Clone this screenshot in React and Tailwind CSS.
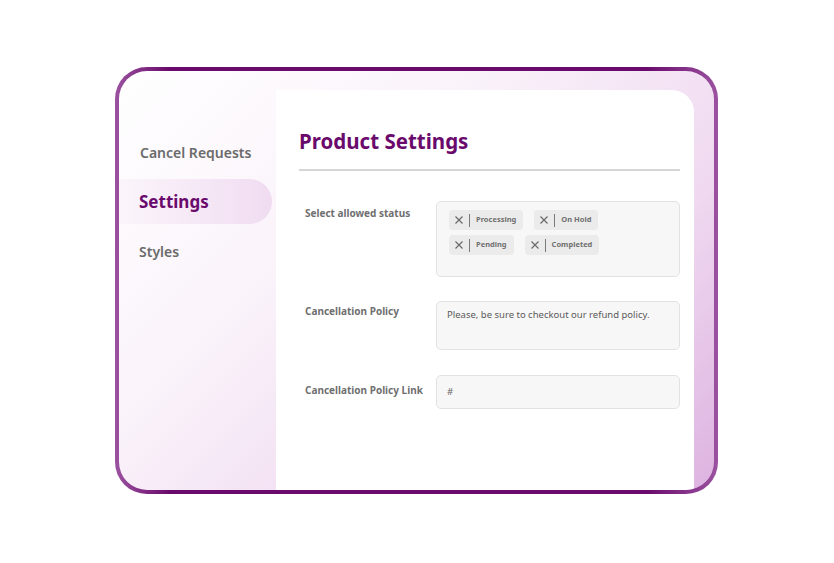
import React from 'react';

const tagsRows = [
    ['Processing', 'On Hold'],
    ['Pending', 'Completed'],
];

const Tag = ({ label }) => (
    <div className="flex items-center h-[20px] bg-[#ebebeb] rounded-[4px] pl-[5px] pr-[7px]">
        <svg width="10" height="10" viewBox="0 0 10 10" className="text-[#6a6a6a]">
            <path d="M1.5 1.5 L8.5 8.5 M8.5 1.5 L1.5 8.5" stroke="currentColor" strokeWidth="1.2" fill="none" />
        </svg>
        <div className="w-px h-[13px] bg-[#7a7a7a] ml-[5px] mr-[6px]"></div>
        <span className="text-[7.5px] font-bold text-[#707070] leading-none">{label}</span>
    </div>
);

const App = () => {
    return (
        <div className="w-[834px] h-[563px] bg-white pl-[115px] pt-[67px]" style={{ fontFamily: '"Noto Sans", "Open Sans", sans-serif' }}>
            {/* Frame */}
            <div className="w-[603px] h-[427px] rounded-[32px] p-[4px] bg-[linear-gradient(90deg,#9b52a0_0%,#6a0a6c_9%,#6a0a6c_88%,#9b52a0_100%)]">
                <div className="w-full h-full rounded-[28px] overflow-hidden flex bg-[linear-gradient(135deg,#ffffff_0%,#faf3fa_35%,#efd8f0_70%,#ddb3e0_100%)]">
                    {/* Sidebar */}
                    <aside className="w-[157px] shrink-0 pt-[59px] flex flex-col gap-[4px]">
                        <div className="h-[45px] flex items-center pl-[21px] text-[14px] font-semibold text-[#6b6b6b]">
                            Cancel Requests
                        </div>
                        <div className="h-[45px] w-[153px] flex items-center pl-[20px] rounded-r-full bg-[linear-gradient(90deg,#fbf5fb_0%,#f0dcf1_100%)] text-[17px] font-bold text-[#6a0a6c]">
                            Settings
                        </div>
                        <div className="h-[45px] mt-[1px] flex items-center pl-[20px] text-[14px] font-semibold text-[#6b6b6b]">
                            Styles
                        </div>
                    </aside>

                    {/* Main panel */}
                    <main className="flex-1 mt-[19px] mr-[20px] bg-white rounded-tr-[22px] pl-[23px] pr-[14px] pt-[36px]">
                        <h1 className="text-[20.5px] font-bold text-[#6a0a6c] leading-[30px]">Product Settings</h1>
                        <div className="h-[2px] bg-[#d6d6d6] mt-[13px] w-[381px]"></div>

                        <div className="flex flex-col pl-[6px]">
                            <div className="flex mt-[30px]">
                                <div className="w-[131px] pt-[5px] text-[10px] font-bold text-[#6f6f6f] leading-[14px]">Select allowed status</div>
                                <div className="w-[244px] h-[76px] bg-[#f7f7f7] border border-[#e2e2e2] rounded-[5px] pl-[12px] pt-[8px] flex flex-col gap-[5px]">
                                    {tagsRows.map((row, i) => (
                                        <div key={i} className="flex gap-[11px]">
                                            {row.map((t) => <Tag key={t} label={t} />)}
                                        </div>
                                    ))}
                                </div>
                            </div>

                            <div className="flex mt-[24px]">
                                <div className="w-[131px] pt-[3px] text-[10px] font-bold text-[#6f6f6f] leading-[14px]">Cancellation Policy</div>
                                <div className="w-[244px] h-[49px] bg-[#f7f7f7] border border-[#e2e2e2] rounded-[5px] pl-[10px] pt-[6px] text-[9.5px] text-[#5a5a5a] leading-[14px]">
                                    Please, be sure to checkout our refund policy.
                                </div>
                            </div>

                            <div className="flex mt-[25px]">
                                <div className="w-[131px] pt-[8px] text-[10px] font-bold text-[#6f6f6f] leading-[14px]">Cancellation Policy Link</div>
                                <div className="w-[244px] h-[34px] bg-[#f7f7f7] border border-[#e2e2e2] rounded-[5px] pl-[10px] flex items-center text-[9.5px] text-[#6a6a6a]">
                                    #
                                </div>
                            </div>
                        </div>
                    </main>
                </div>
            </div>
        </div>
    );
};

export default App;
